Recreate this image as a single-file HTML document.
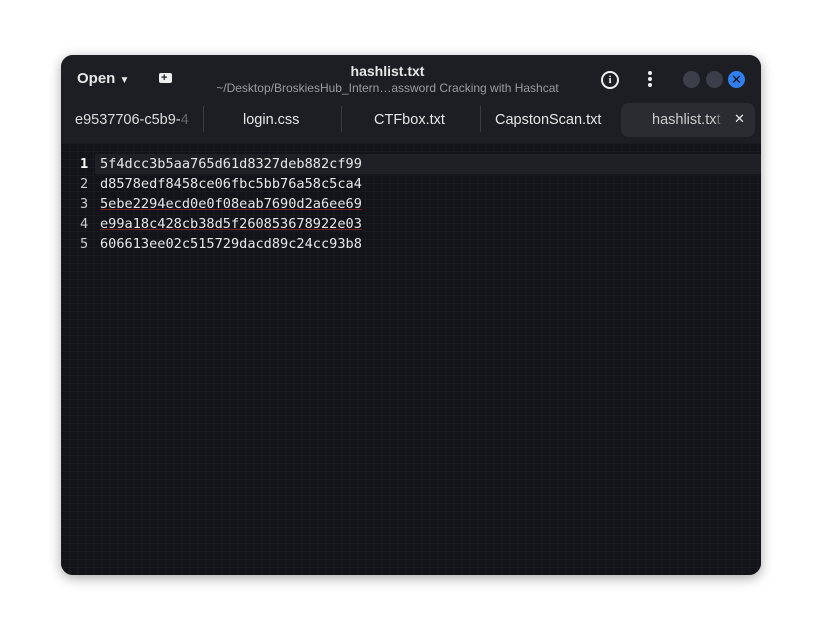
<!DOCTYPE html>
<html><head><style>
body{margin:0;width:822px;height:642px;background:#fff;position:relative;overflow:hidden;font-family:"Liberation Sans","DejaVu Sans",sans-serif}
.win{position:absolute;left:61px;top:55px;width:700px;height:520px;border-radius:12px;overflow:hidden;background:#13151a;box-shadow:0 3px 12px rgba(0,0,0,.35)}
.hdr{position:absolute;left:0;top:0;width:700px;height:88px;background:#1c1e24}
.ed{position:absolute;left:0;top:88px;width:700px;height:432px;background-color:#121419;background-image:linear-gradient(rgba(255,255,255,.025) 1px,transparent 1px),linear-gradient(90deg,rgba(255,255,255,.025) 1px,transparent 1px);background-size:8px 8px}
.t{position:absolute;color:#e6e6e6;white-space:nowrap}
.code{position:absolute;font-family:"DejaVu Sans Mono","Liberation Mono",monospace;font-size:13.6px;color:#e8e8e8;line-height:20px}
.sep{position:absolute;top:51px;width:1px;height:26px;background:#3a3c42}
</style></head><body>
<div class="win">
<div class="hdr">
 <div class="t" style="left:16px;top:15px;font-size:15px;font-weight:bold">Open <span style="font-size:10px">▼</span></div>
 <div style="position:absolute;left:98px;top:18px;width:13px;height:10px;background:#eee;border-radius:2px"></div>
 <div class="t" style="left:100px;top:17px;font-size:11px;color:#1c1e24;font-weight:bold">+</div>
 <div class="t" style="left:0;width:653px;text-align:center;top:8px;font-size:14px;font-weight:bold">hashlist.txt</div>
 <div class="t" style="left:0;width:653px;text-align:center;top:26px;font-size:12px;color:#9a9ca2">~/Desktop/BroskiesHub_Intern…assword Cracking with Hashcat</div>
 <div style="position:absolute;left:540px;top:16px;width:14px;height:14px;border:2px solid #eee;border-radius:50%;color:#eee;font-size:11px;font-weight:bold;text-align:center;line-height:14px;font-family:'Liberation Serif',serif">i</div>
 <div style="position:absolute;left:587px;top:16px;width:4px;height:4px;background:#eee;border-radius:50%;box-shadow:0 6px 0 #eee,0 12px 0 #eee"></div>
 <div style="position:absolute;left:622px;top:16px;width:17px;height:17px;background:#3c3f4a;border-radius:50%"></div>
 <div style="position:absolute;left:645px;top:16px;width:17px;height:17px;background:#3c3f4a;border-radius:50%"></div>
 <div style="position:absolute;left:667px;top:16px;width:17px;height:17px;background:#2f7ff0;border-radius:50%;color:#111;font-size:13px;font-weight:bold;text-align:center;line-height:17px">✕</div>
 <div class="t" style="left:14px;top:57px;font-size:14.5px;color:#ddd">e9537706-c5b9-<span style="color:#666">4</span></div>
 <div class="sep" style="left:142px"></div>
 <div class="t" style="left:182px;top:57px;font-size:14.5px">login.css</div>
 <div class="sep" style="left:280px"></div>
 <div class="t" style="left:313px;top:57px;font-size:14.5px">CTFbox.txt</div>
 <div class="sep" style="left:419px"></div>
 <div class="t" style="left:434px;top:57px;font-size:14.5px">CapstonScan.txt</div>
 <div style="position:absolute;left:560px;top:48px;width:134px;height:34px;background:#2a2c31;border-radius:8px"></div>
 <div class="t" style="left:591px;top:57px;font-size:14.5px;color:#ccc">hashlist.tx<span style="color:#777">t</span></div>
 <div class="t" style="left:673px;top:56px;font-size:13px;font-weight:bold">✕</div>
</div>
<div class="ed">
 <div style="position:absolute;left:34px;top:11px;width:666px;height:20px;background:#1e2025"></div>
 <div class="code" style="left:19px;top:11px;text-align:right;color:#ccc"><b style="color:#fff">1</b><br>2<br>3<br>4<br>5</div>
 <div class="code" style="left:39px;top:11px">5f4dcc3b5aa765d61d8327deb882cf99<br>d8578edf8458ce06fbc5bb76a58c5ca4<br><span style="text-decoration:underline;text-decoration-color:#7a2020">5ebe2294ecd0e0f08eab7690d2a6ee69</span><br><span style="text-decoration:underline;text-decoration-color:#7a2020">e99a18c428cb38d5f260853678922e03</span><br>606613ee02c515729dacd89c24cc93b8</div>
</div>
</div>
</body></html>
